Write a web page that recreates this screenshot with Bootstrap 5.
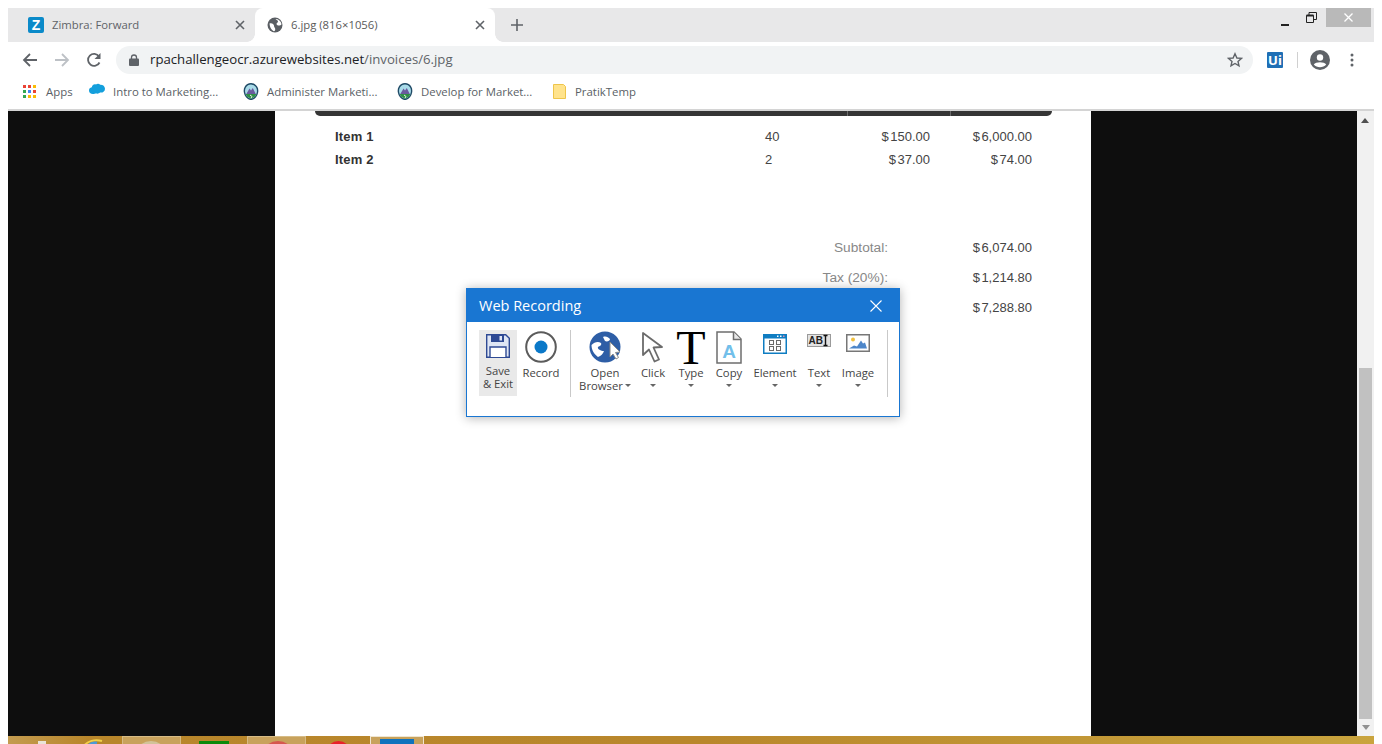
<!doctype html>
<html lang="en">
<head>
<meta charset="utf-8">
<title>6.jpg (816×1056)</title>
<link href="https://cdn.jsdelivr.net/npm/bootstrap@5.3.0/dist/css/bootstrap.min.css" rel="stylesheet">
<style>
    html, body { height: 744px; overflow: hidden; background: #fff; }
    body { font-family: "Open Sans", "Noto Sans", sans-serif; }

    .app-window { width: 1366px; height: 744px; margin-left: 8px; padding-top: 8px; }

    /* tab strip */
    .tab-strip { height: 34px; background: #e8e8e9; font-size: 11.3px; color: #5f6368; white-space: nowrap; }
    .tab-item { width: 247px; padding-left: 20px; gap: 8px; }
    .tab-live { width: 240px; padding-left: 12px; gap: 8px; background: #fff; border-radius: 8px 8px 0 0; position: relative; color: #5a5a5a; }
    .tab-live::before, .tab-live::after { content: ""; position: absolute; bottom: 0; width: 8px; height: 8px; }
    .tab-live::before { left: -8px; background: radial-gradient(circle at 0 0, transparent 7.5px, #fff 8px); }
    .tab-live::after { right: -8px; background: radial-gradient(circle at 100% 0, transparent 7.5px, #fff 8px); }
    .z-logo { width: 16px; height: 16px; border-radius: 2px; background: #0b8ac9; color: #fff; font: 700 14px/16px "Liberation Sans", sans-serif; text-align: center; }
    .tab-x { margin-left: auto; margin-right: 10px; }
    .win-min { margin-left: auto; }
    .win-restore { margin: -16px 0 0 17px; }
    .win-close { width: 45px; height: 19px; background: #b9b9b9; margin-right: 3px; margin-left: 9px; }

    /* toolbar */
    .tool-row { height: 36px; padding-top: 4px; }
    .nav-slot { width: 32px; padding-top: 6px; }
    .nav-first { margin-left: 6px; }
    .omni { width: 1137px; height: 28px; margin-left: 6px; border-radius: 14px; background: #f1f3f4; padding-left: 13px; font-size: 13.2px; color: #202124; }
    .omni-text { margin-left: 11px; }
    .omni-path { color: #5f6368; }
    .omni-star { margin-left: auto; margin-right: 10px; }
    .ui-logo { width: 16px; height: 16px; border-radius: 1px; background: #1f6fb5; color: #fff; font: 700 13px/16px "Open Sans", sans-serif; text-align: center; margin: 6px 0 0 14px; }
    .tool-sep { width: 1px; height: 16px; background: #d0d0d0; margin: 6px 0 0 14px; }
    .tool-avatar { margin: 4px 0 0 12px; }
    .tool-dots { margin: 7px 0 0 20px; }

    /* bookmarks */
    .mark-row { height: 33px; padding: 0 0 3px 15px; border-bottom: 2px solid #d4d4d4; font-size: 11.4px; color: #5a5f66; white-space: nowrap; }
    .mark-one { width: 66px; gap: 10px; }
    .mark-two { width: 154px; gap: 8px; }
    .mark-three { width: 154px; gap: 8px; }
    .mark-four { width: 156px; gap: 8px; }
    .mark-five { gap: 9px; }
    .cloud-icon { margin-bottom: 7px; }

    /* page viewer */
    .viewer { height: 625px; background: #0e0e0e; position: relative; }
    .side-black { width: 267px; }
    .side-black-r { width: 266px; }
    .paper { width: 816px; background: #fff; font-family: "Liberation Sans", Arial, sans-serif; font-size: 13px; color: #444; }
    .head-bar { height: 5px; margin: 0 39px 0 40px; background: #353535; border-radius: 0 0 5px 5px; }
    .head-cell { border-left: 1px solid #6b6b6b; }
    .head-cell-a { width: 103px; margin-left: auto; }
    .head-cell-b { width: 102px; }
    .line-row { display: flex; height: 23px; line-height: 23px; padding-left: 60px; }
    .line-first { margin-top: 9px; }
    .line-name { width: 430px; font-weight: 700; color: #333; letter-spacing: .2px; }
    .line-qty { width: 60px; }
    .line-price { width: 105px; text-align: right; }
    .line-sum { width: 102px; text-align: right; }
    .cash { margin-right: 1.5px; }
    .total-block { margin-top: 62px; }
    .total-row { display: flex; height: 30px; line-height: 30px; }
    .total-label { width: 613px; text-align: right; color: #888; font-size: 13.7px; }
    .total-val { width: 144px; text-align: right; }

    .scroll-track { width: 17px; background: #f1f1f1; }
    .scroll-thumb { width: 13px; height: 351px; margin: 245px 2px 0; background: #c1c1c1; }
    .scroll-up { height: 0; width: 0; border: 4px solid transparent; border-top: 0; border-bottom: 5px solid #505050; margin: 7px 0 0 4px; }
    .scroll-down { height: 0; width: 0; border: 4px solid transparent; border-bottom: 0; border-top: 5px solid #909090; margin: 6px 0 0 5px; }

    /* recorder dialog */
    .rec-dialog { position: absolute; left: 458px; top: 177px; width: 434px; height: 129px; background: #fff; border: 1px solid #1976d2; box-shadow: 0 1px 10px rgba(0, 0, 0, .3); font-family: "Open Sans", "Noto Sans", sans-serif; font-size: 11.3px; color: #444; }
    .rec-title { height: 33px; background: #1976d2; color: #fff; font-size: 14.5px; padding: 0 17px 0 12px; }
    .rec-body { padding: 8px 0 0 12px; }
    .rec-tool { display: flex; flex-direction: column; align-items: center; line-height: 13px; text-align: center; flex: none; white-space: nowrap; }
    .rec-icon { height: 34px; display: flex; align-items: center; justify-content: center; margin-bottom: 2px; }
    .rec-icon-top { align-items: flex-start; padding-top: 4px; }
    .rec-save { width: 38px; height: 66px; background: #e9e9e9; }
    .rec-save .rec-icon { height: 32px; }
    .w-record { width: 40px; margin-left: 4px; }
    .w-open { width: 48px; margin-left: 10px; }
    .w-click { width: 30px; margin-left: 9px; }
    .w-type { width: 30px; margin-left: 8px; }
    .w-copy { width: 30px; margin-left: 8px; }
    .w-element { width: 46px; margin-left: 8px; }
    .w-text { width: 30px; margin-left: 6px; }
    .w-image { width: 36px; margin-left: 6px; }
    .rec-div { width: 1px; height: 67px; background: #c9c9c9; flex: none; }
    .div-a { margin-left: 9px; }
    .div-b { margin-left: 11px; }
    .caret-down { width: 0; height: 0; border: 3px solid transparent; border-bottom: 0; border-top: 3px solid #666; margin-top: 5px; }
    .caret-in { display: inline-block; margin: 0 0 2px 2px; vertical-align: middle; }
    .type-glyph { font: 400 48px/35px "Liberation Serif", serif; color: #000; }

    /* bottom bar */
    .task-bar { height: 8px; overflow: hidden; background: linear-gradient(90deg, #c39c50 0, #b8862b 80px, #b9872c 700px, #c9a43e 1366px); }
    .task-start { width: 8px; height: 3px; margin: 5px 0 0 30px; background: #e9e4d8; flex: none; }
    .task-ie { margin: 3px 19px 0 37px; flex: none; }
    .task-tile { width: 59px; height: 8px; flex: none; background: #c8a25c; border: 1px solid #d6bb85; border-bottom: 0; padding-top: 4px; overflow: hidden; }
    .task-on { width: 54px; border-color: #f0e6d2; padding: 2px 9px 0; margin-left: 19px; }
    .task-blue { height: 6px; background: #0f72bd; }
    .task-green { width: 30px; height: 3px; margin: 5px 18px 0 18px; background: #0b8a0b; flex: none; }
    .task-dot { height: 26px; border-radius: 50%; }
    .dot-gray { width: 30px; margin-left: 13px; background: #d2c39a; }
    .dot-rose { width: 30px; margin-left: 15px; background: #d6574f; }
    .dot-red { width: 25px; height: 25px; margin: 5px 0 0 20px; background: #e8212a; flex: none; }
</style>
</head>
<body>
<div class="app-window d-flex flex-column">

    <div class="tab-strip d-flex align-items-stretch">
        <div class="tab-item d-flex align-items-center">
            <span class="z-logo">Z</span>
            <span>Zimbra: Forward</span>
            <svg class="tab-x" width="10" height="10" viewBox="0 0 10 10"><path d="M1 1l8 8M9 1l-8 8" stroke="#5f6368" stroke-width="1.6"/></svg>
        </div>
        <div class="tab-live d-flex align-items-center">
            <svg width="16" height="16" viewBox="0 0 16 16"><circle cx="8" cy="8" r="7.500" fill="#5a5e63"/><path d="M2.500 6.500c1.500-.5 3 0 4 1 .8 1 .3 1.500.8 2.500.6 1 1.400 1.500 .7 3.500-.5.800-1.500.8-2 .3C4 12.500 2.800 10 2.500 6.500zM8.500 2c1 1 2.500 1.500 2.500 2.500S9.500 6 9.500 7s1.500 1.800 3 1.500 1.800-.8 2-1.500C14 4 11.500 2 8.500 2z" fill="#fff"/></svg>
            <span>6.jpg (816×1056)</span>
            <svg class="tab-x" width="10" height="10" viewBox="0 0 10 10"><path d="M1 1l8 8M9 1l-8 8" stroke="#5f6368" stroke-width="1.6"/></svg>
        </div>
        <div class="d-flex align-items-center flex-grow-1">
            <svg class="ms-3" width="12" height="12" viewBox="0 0 12 12"><path d="M6 0v12M0 6h12" stroke="#5f6368" stroke-width="1.600"/></svg>
            <svg class="win-min" width="8" height="2" viewBox="0 0 8 2"><rect width="8" height="2" fill="#222"/></svg>
            <svg class="win-restore" width="11" height="11" viewBox="0 0 11 11"><path d="M.5 3.500h7v7h-7zM3 3.500v-3h7.500v7h-3" fill="none" stroke="#222"/><path d="M.5 3.500h7" stroke="#222" stroke-width="2"/></svg>
            <div class="win-close d-flex align-items-center justify-content-center align-self-start">
                <svg width="9" height="9" viewBox="0 0 9 9"><path d="M.5.500l8 8M8.500.500l-8 8" stroke="#fff" stroke-width="1.300"/></svg>
            </div>
        </div>
    </div>

    <div class="tool-row d-flex align-items-start">
        <div class="nav-slot nav-first d-flex justify-content-center">
            <svg width="16" height="16" viewBox="0 0 16 16"><path d="M15 8H2M8 2L2 8l6 6" fill="none" stroke="#5f6368" stroke-width="1.800"/></svg>
        </div>
        <div class="nav-slot d-flex justify-content-center">
            <svg width="16" height="16" viewBox="0 0 16 16"><path d="M1 8h13M8 2l6 6-6 6" fill="none" stroke="#bdc1c6" stroke-width="1.800"/></svg>
        </div>
        <div class="nav-slot d-flex justify-content-center">
            <svg width="16" height="16" viewBox="0 0 16 16"><path d="M13.500 10.500A6 6 0 1 1 13 4.500" fill="none" stroke="#5f6368" stroke-width="1.800"/><path d="M14.500 1v6h-6z" fill="#5f6368"/></svg>
        </div>
        <div class="omni d-flex align-items-center">
            <svg width="10" height="12" viewBox="0 0 10 12"><path d="M2.500 5V3.500a2.500 2.500 0 0 1 5 0V5" fill="none" stroke="#5f6368" stroke-width="1.300"/><rect y="4.500" width="10" height="7.500" rx="1" fill="#5f6368"/></svg>
            <span class="omni-text">rpachallengeocr.azurewebsites.net<span class="omni-path">/invoices/6.jpg</span></span>
            <svg class="omni-star" width="16" height="16" viewBox="0 0 16 16"><path d="M8 1.800l1.900 4.200 4.500.4-3.400 3 1 4.500L8 11.500l-4 2.400 1-4.500-3.400-3 4.500-.4z" fill="none" stroke="#5f6368" stroke-width="1.400"/></svg>
        </div>
        <div class="ui-logo">Ui</div>
        <div class="tool-sep"></div>
        <svg class="tool-avatar" width="20" height="20" viewBox="0 0 20 20"><circle cx="10" cy="10" r="10" fill="#5f6368"/><circle cx="10" cy="7.500" r="3.200" fill="#fff"/><path d="M3.800 14.500c2-3 10.400-3 12.400 0-3 3.500-9.400 3.500-12.400 0z" fill="#fff"/></svg>
        <svg class="tool-dots" width="4" height="14" viewBox="0 0 4 14"><circle cx="2" cy="2" r="1.500" fill="#5f6368"/><circle cx="2" cy="7" r="1.500" fill="#5f6368"/><circle cx="2" cy="12" r="1.500" fill="#5f6368"/></svg>
    </div>

    <div class="mark-row d-flex align-items-center">
        <div class="mark-one d-flex align-items-center">
            <svg width="13" height="13" viewBox="0 0 13 13">
                <rect width="3" height="3" fill="#ea4335"/><rect x="5" width="3" height="3" fill="#ea4335"/><rect x="10" width="3" height="3" fill="#fbbc05"/>
                <rect y="5" width="3" height="3" fill="#34a853"/><rect x="5" y="5" width="3" height="3" fill="#4285f4"/><rect x="10" y="5" width="3" height="3" fill="#ea4335"/>
                <rect y="10" width="3" height="3" fill="#34a853"/><rect x="5" y="10" width="3" height="3" fill="#fbbc05"/><rect x="10" y="10" width="3" height="3" fill="#fbbc05"/>
            </svg>
            <span>Apps</span>
        </div>
        <div class="mark-two d-flex align-items-center">
            <svg class="cloud-icon" width="16" height="12" viewBox="0 0 16 12"><path d="M4 11C1.500 11 0 9.500 0 7.500 0 5.800 1 4.500 2.800 4.200 3.300 2 5 .8 7 1.500c1-1 3-1.200 4.200.2 2.500-.2 4.800 1.500 4.800 4 0 2.800-2.500 4.300-5 3.800-1 1.200-3 1.500-4.200.7C6.300 10.800 5 11 4 11z" fill="#139fdc"/></svg>
            <span>Intro to Marketing...</span>
        </div>
        <div class="mark-three d-flex align-items-center">
            <svg width="16" height="17" viewBox="0 0 16 17"><path d="M8 .800c2.500 0 4.500 1.200 5.700 3.300 1.800 3 .8 7.500-1.200 9.800-1.200 1.300-3 2.300-4.500 2.600-1.500-.3-3.300-1.300-4.500-2.600C1.500 11.600.5 7.100 2.300 4.100 3.500 2 5.500 .8 8 .800z" fill="#a9dbe9" stroke="#1f4a66" stroke-width="1.400"/><path d="M3 11.500L6.500 5.500 8 7.500 9.800 5 13 11.500z" fill="#6a5a9e"/><path d="M2.800 11h10.400l-1 2.500L8 15.800 3.800 13.500z" fill="#2f8f45"/><path d="M7 12l2 1.500-1 1.500" fill="none" stroke="#e8f4e8"/></svg>
            <span>Administer Marketi...</span>
        </div>
        <div class="mark-four d-flex align-items-center">
            <svg width="16" height="17" viewBox="0 0 16 17"><path d="M8 .800c2.500 0 4.500 1.200 5.700 3.300 1.800 3 .8 7.500-1.200 9.800-1.200 1.300-3 2.300-4.500 2.600-1.500-.3-3.300-1.300-4.500-2.600C1.500 11.600.5 7.100 2.300 4.100 3.500 2 5.500 .8 8 .800z" fill="#a9dbe9" stroke="#1f4a66" stroke-width="1.400"/><path d="M3 11.500L6.500 5.500 8 7.500 9.800 5 13 11.500z" fill="#6a5a9e"/><path d="M2.800 11h10.400l-1 2.500L8 15.800 3.800 13.500z" fill="#2f8f45"/><path d="M7 12l2 1.500-1 1.500" fill="none" stroke="#e8f4e8"/></svg>
            <span>Develop for Market...</span>
        </div>
        <div class="mark-five d-flex align-items-center">
            <svg width="13" height="15" viewBox="0 0 13 15"><path d="M.5.500h10l2 2v12H.5z" fill="#ffe38c" stroke="#eec54a"/></svg>
            <span>PratikTemp</span>
        </div>
    </div>

    <div class="viewer d-flex">
        <div class="side-black"></div>
        <div class="paper">
            <div class="head-bar d-flex">
                <div class="head-cell head-cell-a"></div>
                <div class="head-cell head-cell-b"></div>
            </div>
            <div class="line-row line-first">
                <div class="line-name">Item 1</div>
                <div class="line-qty">40</div>
                <div class="line-price"><span class="cash">$</span>150.00</div>
                <div class="line-sum"><span class="cash">$</span>6,000.00</div>
            </div>
            <div class="line-row">
                <div class="line-name">Item 2</div>
                <div class="line-qty">2</div>
                <div class="line-price"><span class="cash">$</span>37.00</div>
                <div class="line-sum"><span class="cash">$</span>74.00</div>
            </div>
            <div class="total-block">
                <div class="total-row"><div class="total-label">Subtotal:</div><div class="total-val"><span class="cash">$</span>6,074.00</div></div>
                <div class="total-row"><div class="total-label">Tax (20%):</div><div class="total-val"><span class="cash">$</span>1,214.80</div></div>
                <div class="total-row"><div class="total-label">Total:</div><div class="total-val"><span class="cash">$</span>7,288.80</div></div>
            </div>
        </div>
        <div class="side-black-r"></div>
        <div class="scroll-track">
            <div class="scroll-up"></div>
            <div class="scroll-thumb"></div>
            <div class="scroll-down"></div>
        </div>

        <div class="rec-dialog">
            <div class="rec-title d-flex align-items-center justify-content-between">
                <span>Web Recording</span>
                <svg width="12" height="12" viewBox="0 0 12 12"><path d="M.5.500l11 11M11.500.500l-11 11" stroke="#fff" stroke-width="1.100"/></svg>
            </div>
            <div class="rec-body d-flex align-items-start">
                <div class="rec-tool rec-save">
                    <div class="rec-icon">
                        <svg width="24" height="24" viewBox="0 0 24 24"><path d="M.7.700h19l3.600 3.600v19H.7z" fill="#dfe6f4" stroke="#2f4a94" stroke-width="1.400"/><path d="M5 1v7h13V1z" fill="#2f4a94"/><rect x="13.500" y="2" width="2.500" height="4.500" fill="#dfe6f4"/><path d="M4 23v-10h16v10" fill="#fff" stroke="#2f4a94" stroke-width="1.400"/></svg>
                    </div>
                    <div class="rec-label">Save<br>&amp; Exit</div>
                </div>
                <div class="rec-tool w-record">
                    <div class="rec-icon">
                        <svg width="32" height="32" viewBox="0 0 32 32"><circle cx="16" cy="16" r="14.800" fill="#fff" stroke="#5b5b5b" stroke-width="2"/><circle cx="16" cy="16" r="6.500" fill="#0a78c8"/></svg>
                    </div>
                    <div class="rec-label">Record</div>
                </div>
                <div class="rec-div div-a"></div>
                <div class="rec-tool w-open">
                    <div class="rec-icon">
                        <svg width="34" height="32" viewBox="0 0 34 32"><circle cx="17" cy="16" r="15.500" fill="#2e5ea6"/><path d="M3.500 14c3-3 6.500-4 9.500-2 1 2-1 3-3 4-1 2 3 4 6 4-1 3-3 5-6 6-4-3-6.500-7-6.500-12zM15 6c3-1 5 0 7 2 0 2-3 3-5 2z" fill="#fff"/><path d="M22 11v15l3-3 3 5 2.500-1.500-3-5 4.500-.5z" fill="#fff" stroke="#8a8a8a"/></svg>
                    </div>
                    <div class="rec-label">Open<br>Browser<span class="caret-down caret-in"></span></div>
                </div>
                <div class="rec-tool w-click">
                    <div class="rec-icon">
                        <svg width="24" height="33" viewBox="0 0 24 33"><path d="M2 2v22l6-5.500 5.500 12 4.500-2-5.500-12 8.500-.5z" fill="#fff" stroke="#6b6b6b" stroke-width="1.800" stroke-linejoin="round"/></svg>
                    </div>
                    <div class="rec-label">Click</div>
                    <span class="caret-down"></span>
                </div>
                <div class="rec-tool w-type">
                    <div class="rec-icon"><span class="type-glyph">T</span></div>
                    <div class="rec-label">Type</div>
                    <span class="caret-down"></span>
                </div>
                <div class="rec-tool w-copy">
                    <div class="rec-icon">
                        <svg width="26" height="33" viewBox="0 0 26 33"><path d="M1 1h17l7 7v24H1z" fill="#fff" stroke="#6e6e6e" stroke-width="1.500"/><path d="M17.500 1v7.500H25" fill="#e8e8e8" stroke="#6e6e6e" stroke-width="1.500"/><text x="13" y="27" text-anchor="middle" font-family="Liberation Sans, sans-serif" font-weight="700" font-size="19" fill="#72bfea">A</text></svg>
                    </div>
                    <div class="rec-label">Copy</div>
                    <span class="caret-down"></span>
                </div>
                <div class="rec-tool w-element">
                    <div class="rec-icon rec-icon-top">
                        <svg width="24" height="20" viewBox="0 0 24 20"><rect width="24" height="20" fill="#0f7dc2"/><rect x="1.500" y="4.500" width="21" height="14" fill="#fff"/><g fill="#fff"><rect x="14" y="1.500" width="1.500" height="1.500"/><rect x="17" y="1.500" width="1.500" height="1.500"/></g><rect x="20" y="1.500" width="1.500" height="1.500" fill="#e58aa8"/><g fill="none" stroke="#6b6b6b"><rect x="6.500" y="6.500" width="4" height="4"/><rect x="13.500" y="6.500" width="4" height="4"/><rect x="6.500" y="12.500" width="4" height="4"/><rect x="13.500" y="12.500" width="4" height="4"/></g></svg>
                    </div>
                    <div class="rec-label">Element</div>
                    <span class="caret-down"></span>
                </div>
                <div class="rec-tool w-text">
                    <div class="rec-icon rec-icon-top">
                        <svg width="24" height="13" viewBox="0 0 24 13"><rect x=".5" y=".5" width="23" height="12" fill="#e2e2e2" stroke="#9a9a9a"/><text x="1.500" y="10" font-family="Liberation Sans, sans-serif" font-weight="700" font-size="10" fill="#222">AB</text><path d="M16.500 1.500h4M16.500 11.500h4M18.500 1.500v10" stroke="#111" stroke-width="1.400"/></svg>
                    </div>
                    <div class="rec-label">Text</div>
                    <span class="caret-down"></span>
                </div>
                <div class="rec-tool w-image">
                    <div class="rec-icon rec-icon-top">
                        <svg width="24" height="18" viewBox="0 0 24 18"><rect x=".75" y=".75" width="22.500" height="16.500" fill="#fff" stroke="#777" stroke-width="1.500"/><circle cx="7" cy="5.500" r="2" fill="#f0c040"/><path d="M3 14.500l5-3 3 1 4-6 2 3 2-1 2 6z" fill="#4d86c9"/></svg>
                    </div>
                    <div class="rec-label">Image</div>
                    <span class="caret-down"></span>
                </div>
                <div class="rec-div div-b"></div>
            </div>
        </div>
    </div>

    <div class="task-bar d-flex">
        <div class="task-start"></div>
        <svg class="task-ie" width="20" height="8" viewBox="0 0 20 8"><path d="M1 7C4 2 12 0 19 2" fill="none" stroke="#f2d04a" stroke-width="2"/><path d="M5 8C7 4 10 3 14 4" fill="none" stroke="#4a9bd8" stroke-width="2.500"/></svg>
        <div class="task-tile"><div class="task-dot dot-gray"></div></div>
        <div class="task-green"></div>
        <div class="task-tile"><div class="task-dot dot-rose"></div></div>
        <div class="dot-red task-dot"></div>
        <div class="task-tile task-on"><div class="task-blue"></div></div>
    </div>
</div>
<script src="https://cdn.jsdelivr.net/npm/bootstrap@5.3.0/dist/js/bootstrap.bundle.min.js"></script>
</body>
</html>
